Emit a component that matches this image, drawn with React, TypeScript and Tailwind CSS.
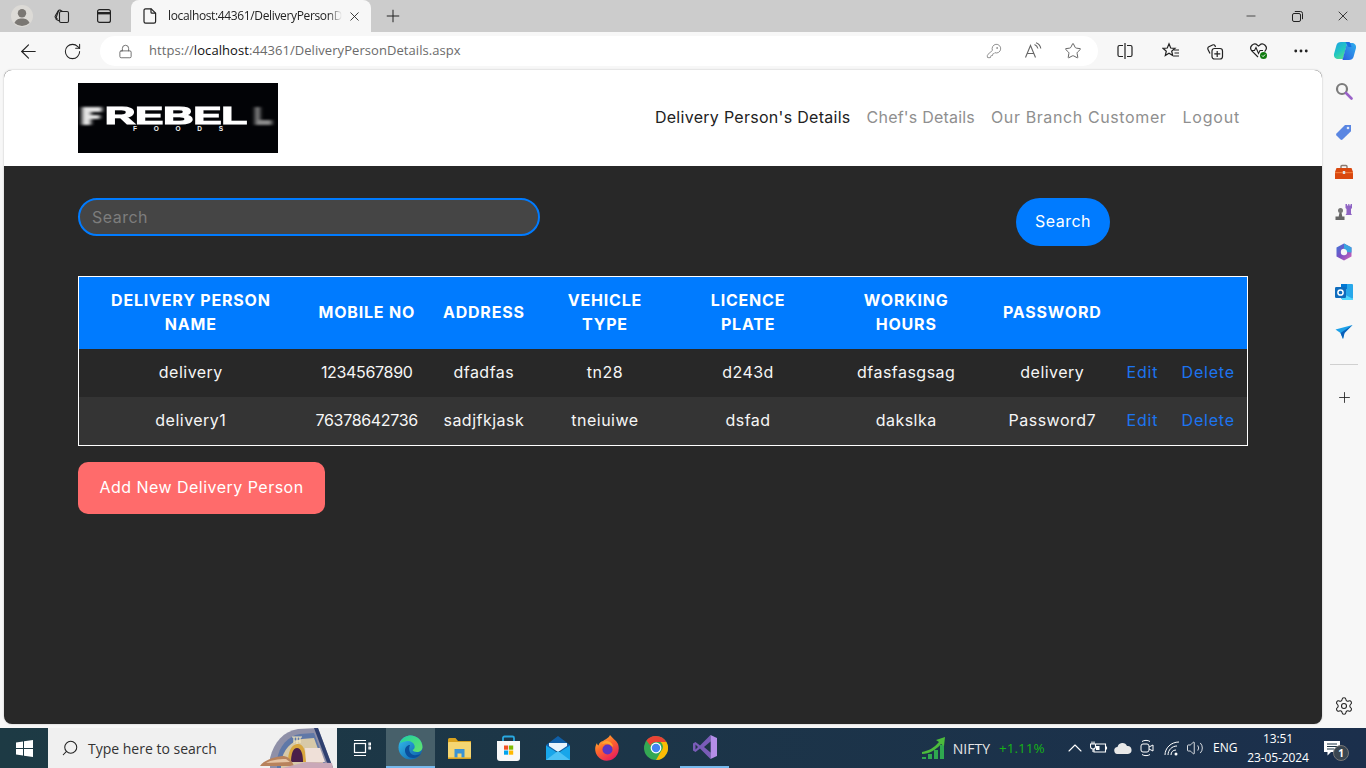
import React from "react";
import {
  ArrowLeft,
  RotateCw,
  Lock,
  KeyRound,
  Star,
  Plus,
  X,
  Minus,
  MoreHorizontal,
  Settings,
  ChevronUp,
  Volume2,
  Search,
} from "lucide-react";

const ui = "font-['Open_Sans','Noto_Sans',sans-serif]";
const mont = "font-['Inter','Noto_Sans',sans-serif]";

const rows = [
  ["delivery", "1234567890", "dfadfas", "tn28", "d243d", "dfasfasgsag", "delivery"],
  ["delivery1", "76378642736", "sadjfkjask", "tneiuiwe", "dsfad", "dakslka", "Password7"],
];

const Logo = () => (
  <svg width="200" height="70" viewBox="0 0 200 70" className="block shrink-0">
    <defs>
      <filter id="b1" x="-30%" y="-30%" width="160%" height="160%"><feGaussianBlur stdDeviation="2 1" /></filter>
      <filter id="b2"><feGaussianBlur stdDeviation="0.35" /></filter>
    </defs>
    <rect width="200" height="70" fill="#020306" />
    <path d="M4 24h20v5H13v3h9v4h-9v6H4z" fill="#e4e4e4" filter="url(#b1)" />
    <path d="M177 24h5v13h12v5h-17z" fill="#8a8a8a" filter="url(#b1)" />
    <text x="27" y="41" textLength="142" lengthAdjust="spacingAndGlyphs" fontFamily="Liberation Sans" fontWeight="700" fontSize="23" fill="#fff" stroke="#fff" strokeWidth="1.2" filter="url(#b2)">REBEL</text>
    <text x="55" y="48" textLength="90" fontFamily="Liberation Sans" fontWeight="700" fontSize="6.5" fill="#f0f0f0">FOODS</text>
  </svg>
);

const Workspaces = () => (
  <svg width="18" height="18" viewBox="0 0 18 18" fill="none" stroke="#222" strokeWidth="1.1">
    <rect x="6.5" y="4.5" width="9" height="11" rx="1.5" />
    <path d="M6.5 14 L3.8 12.8 a1.4 1.4 0 0 1-.8-1.8 L5.4 4 a1.4 1.4 0 0 1 1.7-.9 L9.5 4.5" />
    <path d="M4.5 12 L2.6 10.6 a1.4 1.4 0 0 1-.3-1.9 L5.6 3.4" />
  </svg>
);

const TabActions = () => (
  <svg width="16" height="16" viewBox="0 0 16 16" fill="none" stroke="#222" strokeWidth="1.2">
    <rect x="1.6" y="1.6" width="12.8" height="12.8" rx="2" />
    <path d="M1.6 5.2H14.4" strokeWidth="2.4" />
  </svg>
);

const Doc = () => (
  <svg width="14" height="16" viewBox="0 0 14 16" fill="none" stroke="#222" strokeWidth="1.2">
    <path d="M2.6 .8h5.6l4.4 4.4v8.4a1.6 1.6 0 0 1-1.6 1.6H2.6A1.6 1.6 0 0 1 1 13.6V2.4A1.6 1.6 0 0 1 2.6 .8z" />
    <path d="M8 .8v3.4a1 1 0 0 0 1 1h3.6" />
  </svg>
);

const Avatar = () => (
  <svg width="22" height="22" viewBox="0 0 22 22">
    <circle cx="11" cy="11" r="11" fill="#dcdad6" />
    <circle cx="11" cy="8.2" r="4.2" fill="#7a7773" />
    <path d="M3.5 18c1-3.4 4-4.6 7.5-4.6s6.5 1.2 7.5 4.6A11 11 0 0 1 3.5 18z" fill="#7a7773" />
  </svg>
);

const Restore = () => (
  <svg width="11" height="11" viewBox="0 0 11 11" fill="none" stroke="#222" strokeWidth="1">
    <rect x=".5" y="2.5" width="8" height="8" rx="1.5" />
    <path d="M2.8 .5h5.7a2 2 0 0 1 2 2v5.7" />
  </svg>
);

const ReadAloud = () => (
  <svg width="18" height="18" viewBox="0 0 18 18" fill="none" stroke="#666" strokeWidth="1.1">
    <path d="M1.5 15.5 6.5 3.5l5 12M3.2 11.5h6.6" />
    <path d="M10.5 2.5c1.8.7 3 2.2 3.4 4M12 .8c2.6 1 4.3 3 4.8 5.7" />
  </svg>
);

const SplitScreen = () => (
  <svg width="16" height="18" viewBox="0 0 16 18" fill="none" stroke="#222" strokeWidth="1.2">
    <path d="M6 3.5H2.5a1.5 1.5 0 0 0-1.5 1.5v8a1.5 1.5 0 0 0 1.5 1.5H6M10 3.5h3.5a1.5 1.5 0 0 1 1.5 1.5v8a1.5 1.5 0 0 1-1.5 1.5H10M8 1v16" />
  </svg>
);

const Favorites = () => (
  <svg width="18" height="18" viewBox="0 0 18 18" fill="none" stroke="#222" strokeWidth="1.2">
    <path d="M7 1.8 8.7 6l4.3.3-3.3 2.9 1 4.3L7 11.2l-3.7 2.3 1-4.3L1 6.3 5.3 6z" />
    <path d="M12 8h5M12.5 11h4.5M11.5 14h5.5" />
  </svg>
);

const Collections = () => (
  <svg width="18" height="18" viewBox="0 0 18 18" fill="none" stroke="#222" strokeWidth="1.2">
    <path d="M4 11.5 2 7.5a2 2 0 0 1 .9-2.7L6.5 3a2 2 0 0 1 2.6.9L9.5 5" />
    <rect x="6" y="6.5" width="10.5" height="10.5" rx="2.5" />
    <path d="M11.2 9v6M8.3 11.8h6" />
  </svg>
);

const Health = () => (
  <svg width="20" height="20" viewBox="0 0 20 20" fill="none">
    <path d="M9 16 2.8 9.8a4 4 0 0 1 5.7-5.6L9.5 5l1-.8a4 4 0 0 1 5.7 5.6l-.7.7" stroke="#222" strokeWidth="1.2" />
    <path d="M2 9.5h3.5l1.5-3 2.5 6 1.5-3h3" stroke="#222" strokeWidth="1.1" />
    <circle cx="14.5" cy="14.5" r="3.5" fill="#107c10" />
    <path d="m13 14.5 1.1 1.1 2-2.1" stroke="#fff" strokeWidth="1" />
  </svg>
);

const Copilot = () => (
  <svg width="24" height="24" viewBox="0 0 24 24">
    <defs>
      <linearGradient id="c1" x1="0" y1="0" x2="0.6" y2="1">
        <stop offset="0" stopColor="#1d9fe8" />
        <stop offset=".6" stopColor="#22c8c0" />
        <stop offset="1" stopColor="#55dd90" />
      </linearGradient>
      <linearGradient id="c2" x1="1" y1="0" x2="0" y2="1">
        <stop offset="0" stopColor="#2fb0ee" />
        <stop offset="1" stopColor="#2a5fe0" />
      </linearGradient>
    </defs>
    <path d="M8 3h6.5l-4.5 17H5.5C2.5 20 .5 18 1 15L3.5 6C4 4 5.8 3 8 3z" fill="url(#c1)" />
    <path d="M16 21h-6.5L14 4h4.5c3 0 5 2 4.5 5l-2.5 9c-.5 2-2.3 3-4.5 3z" fill="url(#c2)" />
    <path d="M12.5 3h3c1 0 1.5.5 1.8 1.2l1.2 3.8h-3z" fill="#1a6fe0" />
  </svg>
);

const SideSearch = () => (
  <svg width="18" height="18" viewBox="0 0 18 18" fill="none">
    <circle cx="7" cy="7" r="5" stroke="#7c7c7c" strokeWidth="2.2" />
    <path d="m11 11 5.5 5.5" stroke="#9a62c8" strokeWidth="2.6" strokeLinecap="round" />
  </svg>
);

const Tag = () => (
  <svg width="18" height="18" viewBox="0 0 18 18">
    <path d="M1.5 10.5 10 2h6v6.2L7.5 16.5a1.5 1.5 0 0 1-2 0l-4-4a1.5 1.5 0 0 1 0-2z" fill="#5a86e2" />
    <circle cx="13" cy="5" r="1.3" fill="#dfe8fa" />
  </svg>
);

const Toolbox = () => (
  <svg width="18" height="16" viewBox="0 0 18 16">
    <path d="M6 4V2.5A1 1 0 0 1 7 1.5h4a1 1 0 0 1 1 1V4" fill="none" stroke="#8a7a70" strokeWidth="1.4" />
    <path d="M1.5 4h15L18 8v7H0V8z" fill="#d9480f" />
    <rect x="0" y="8" width="18" height="1.2" fill="#f07a3a" />
    <rect x="7.8" y="7" width="2.4" height="3" fill="#dfe3e6" />
  </svg>
);

const Chess = () => (
  <svg width="18" height="18" viewBox="0 0 18 18">
    <path d="M10.5 1h1.5v1.5h1.2V1h1.2v1.5h1.2V1H17v4l-1 1v4.5l1 1.5h-6.500l1-1.500V6l-1-1z" fill="#8f63c4" />
    <circle cx="5.5" cy="7.5" r="2.5" fill="#777" />
    <path d="M4.5 9.5h2l.8 4h2.200v3.500H.5v-3.500h3.200z" fill="#666" />
  </svg>
);

const M365 = () => (
  <svg width="18" height="18" viewBox="0 0 18 18">
    <defs>
      <linearGradient id="m1" x1="0" y1="0" x2="1" y2="1">
        <stop offset="0" stopColor="#3b78d8" />
        <stop offset=".5" stopColor="#7c4fc4" />
        <stop offset="1" stopColor="#d868b8" />
      </linearGradient>
    </defs>
    <path d="M9 .5 16.5 4.5v9L9 17.5 1.5 13.5v-9z" fill="url(#m1)" />
    <circle cx="9" cy="9" r="3.2" fill="#f7f7f7" />
    <path d="M16.5 4.5v5L12 9a3 3 0 0 0-3-3V.5z" fill="#39a5e0" />
  </svg>
);

const Outlook = () => (
  <svg width="18" height="18" viewBox="0 0 18 18">
    <rect x="6" y="1" width="12" height="15" rx="1" fill="#28a8ea" />
    <rect x="6" y="1" width="6" height="5" fill="#0078d4" />
    <path d="M6 9.5 18 16v1H7z" fill="#50d9ff" />
    <rect x="0" y="4" width="11" height="11" rx="1.2" fill="#0f6cbd" />
    <circle cx="5.5" cy="9.5" r="2.6" fill="none" stroke="#fff" strokeWidth="1.5" />
  </svg>
);

const Plane = () => (
  <svg width="18" height="16" viewBox="0 0 18 16">
    <path d="M.5 5.5 17.5 1 9.5 9 8 15 5.5 9z" fill="#1da1e8" />
    <path d="M17.5 1 5.5 9 8 15 9.5 9z" fill="#0b5fb8" />
  </svg>
);

const WindowsLogo = () => (
  <svg width="17" height="17" viewBox="0 0 17 17" fill="#fff">
    <path d="M0 2.4 7 1.4V8H0zM8 1.2 17 0v8H8zM0 9h7v6.6l-7-1zM8 9h9v8l-9-1.2z" />
  </svg>
);

const TaskView = () => (
  <svg width="18" height="18" viewBox="0 0 18 18" fill="none" stroke="#fff" strokeWidth="1.2">
    <rect x="1.5" y="4.5" width="11" height="9" />
    <path d="M1 1.5h12M1 16.5h12M16 4h1.5v2H16zM16 8h1.5v2H16z" />
  </svg>
);

const Edge = () => (
  <svg width="25" height="25" viewBox="0 0 25 25">
    <defs>
      <linearGradient id="e1" x1="0" y1="0" x2="1" y2="1">
        <stop offset="0" stopColor="#35c1f1" />
        <stop offset="1" stopColor="#0c59a4" />
      </linearGradient>
      <linearGradient id="e2" x1="0" y1="0" x2="1" y2="1">
        <stop offset="0" stopColor="#1fd1a0" />
        <stop offset="1" stopColor="#66e36b" />
      </linearGradient>
    </defs>
    <circle cx="12.5" cy="12.5" r="12" fill="url(#e1)" />
    <path d="M2 8C4 2.5 9 .5 12.5 .5 19 .5 24.5 5.5 24.5 12c0 3-2.5 5-5.5 5-2.5 0-4-1-4.5-2 2-1 2.5-2.5 2-4.5C15.5 7 12 5.5 9 6 6 6.5 3.5 7.5 2 8z" fill="url(#e2)" />
    <path d="M12 10c-3 0-5 2.5-5 5.5 0 4 3.5 8 9 7.5 3-.5 5.5-2 7-4.5-2 1.5-5 2-7.5 1.5C12 19 10 15 12 10z" fill="#0a4f9c" />
  </svg>
);

const Explorer = () => (
  <svg width="23" height="21" viewBox="0 0 23 21">
    <path d="M0 1.5A1.5 1.5 0 0 1 1.5 0h6L10 3h13v3H0z" fill="#d9a21e" />
    <rect y="4" width="23" height="17" rx="1" fill="#f5d672" />
    <path d="M6.5 11h10v8.5h-3v-4h-4v4h-3z" fill="#3a93d4" />
    <rect x="0" y="19.5" width="23" height="1.5" fill="#d9a21e" />
  </svg>
);

const Store = () => (
  <svg width="23" height="26" viewBox="0 0 23 26">
    <path d="M6 6V3a1.5 1.5 0 0 1 1.5-1.5h8A1.5 1.5 0 0 1 17 3v3" fill="none" stroke="#29a8e0" strokeWidth="1.8" />
    <path d="M0 6h23v17a3 3 0 0 1-3 3H3a3 3 0 0 1-3-3z" fill="#f8f8f8" />
    <rect x="7" y="10.5" width="4.2" height="4.2" fill="#f25022" />
    <rect x="12" y="10.5" width="4.2" height="4.2" fill="#7fba00" />
    <rect x="7" y="15.5" width="4.2" height="4.2" fill="#00a4ef" />
    <rect x="12" y="15.5" width="4.2" height="4.2" fill="#ffb900" />
  </svg>
);

const Mail = () => (
  <svg width="24" height="24" viewBox="0 0 24 24">
    <path d="M12 0 24 9v3L12 16 0 12V9z" fill="#0f5fa8" />
    <path d="M3 7h18v3l-9 6-9-6z" fill="#e8f4fc" />
    <path d="M0 9.5 12 17 24 9.5V24H0z" fill="#18a6ea" />
    <path d="M0 24 12 15l12 9z" fill="#4cc2f5" />
  </svg>
);

const Firefox = () => (
  <svg width="24" height="26" viewBox="0 0 24 26">
    <defs>
      <linearGradient id="f1" x1="0" y1="0" x2="0.6" y2="1">
        <stop offset="0" stopColor="#ffcf3a" />
        <stop offset=".5" stopColor="#ff6a2a" />
        <stop offset="1" stopColor="#e8215c" />
      </linearGradient>
    </defs>
    <path d="M15 0c2 3 6 5 8 9 2 6 0 12-5 15-5 3-12 2-15.5-3C-1 16 0 11 2 8c0 1 .5 2 1.5 2.5C4 8 6 6.5 8 6c2-1.5 6-3 7-6z" fill="url(#f1)" />
    <circle cx="12.5" cy="14.5" r="5" fill="#5b35c4" />
    <path d="M7 9c3-1 8-1 11 3 0-3-3-6-6-6S8 7 7 9z" fill="#ffa62e" />
  </svg>
);

const Chrome = () => (
  <svg width="24" height="24" viewBox="0 0 24 24">
    <circle cx="12" cy="12" r="12" fill="#34a853" />
    <path d="M12 0a12 12 0 0 1 10.4 6H12a6 6 0 0 0-5.6 3.7L2.4 4.5A12 12 0 0 1 12 0z" fill="#ea4335" />
    <path d="M22.4 6A12 12 0 0 1 12 24l5.2-9a6 6 0 0 0-.7-9z" fill="#fbbc05" />
    <circle cx="12" cy="12" r="5.4" fill="#fff" />
    <circle cx="12" cy="12" r="4.2" fill="#4285f4" />
  </svg>
);

const VisualStudio = () => (
  <svg width="24" height="24" viewBox="0 0 24 24">
    <path d="M17.5 0 7 10.5 2.5 7 0 8.5v7L2.5 17 7 13.5 17.5 24z" fill="#7a5cb8" />
    <path d="M17.5 0 24 3v18l-6.5 3z" fill="#b58ee8" />
    <path d="M17.5 6.5v11L11 12z" fill="#1d3444" />
    <path d="M2.5 9.5v5L5 12z" fill="#1d3444" />
  </svg>
);

const SearchArt = () => (
  <svg width="77" height="40" viewBox="0 0 77 40" className="block shrink-0">
    <path d="M10 30C14 14 24 3 38 1l20-1 15 40H10z" fill="#8f90a8" />
    <path d="M58 0 73 40h-4L54 0z" fill="#2f4070" />
    <path d="M17 32C19 18 28 8 40 6l14-1 13 35H17z" fill="#5f78a8" />
    <path d="M21 34C23 22 31 13 42 11l12-1 11 30H21z" fill="#d7c9a8" />
    <path d="M28 34c0-10 3-17 9-18s9 6 9 18z" fill="#d8a63e" />
    <path d="M31 34c0-8 2-14 6-14s6 6 6 14z" fill="#4a1f4a" />
    <path d="M45 20h15l5 14H46z" fill="#efe0d8" />
    <path d="M0 38c4-6 14-9 22-10 6 0 9 3 12 10z" fill="#b8825c" />
    <path d="M6 35c5-3 12-4 20-4l4 3z" fill="#e6c4a4" />
    <path d="M22 40 46 34l26 1 1 5z" fill="#c9a8b8" />
    <path d="M32 9h10M34 13h6M34 9v6M37 9v7M40 9v6" stroke="#f4e6bc" strokeWidth="1.2" fill="none" />
  </svg>
);

const Nifty = () => (
  <svg width="24" height="24" viewBox="0 0 24 24" fill="#2fa84f">
    <path d="M0 21h4v2H0zM6 18h4v5H6zM12 14h4v9h-4zM18 9h4v14h-4z" />
    <path d="M0 16C6 15 12 12 17 6l-3-2 9-3-1 9-3-2C14 14 7 18 0 18z" fill="#4cbb3c" />
  </svg>
);

const Battery = () => (
  <svg width="18" height="14" viewBox="0 0 18 14" fill="none" stroke="#fff" strokeWidth="1.1">
    <path d="M6 3h9.5v8H4V8" />
    <path d="M16.5 5.5v3" />
    <path d="M.5 3h5v2.5a2.5 2.5 0 0 1-5 0zM2 .5V3M4 .5V3M3 8v3" />
    <rect x="6" y="5" width="3.5" height="4" fill="#fff" stroke="none" />
  </svg>
);

const Cloud = () => (
  <svg width="18" height="12" viewBox="0 0 18 12" fill="#e8e8e8">
    <path d="M4 12a3.5 3.5 0 0 1-.5-7A5 5 0 0 1 13 4a4 4 0 0 1 1 8z" />
  </svg>
);

const Meet = () => (
  <svg width="14" height="18" viewBox="0 0 14 18" fill="none" stroke="#fff" strokeWidth="1">
    <rect x="1" y="5" width="8" height="8" rx="2" />
    <path d="m9 8 4-2v6l-4-2M2 2.5C4 1 8 1 10 2.5M2 15.500c2 1.500 6 1.500 8 0" />
  </svg>
);

const Wifi = () => (
  <svg width="16" height="15" viewBox="0 0 16 15" fill="none" stroke="#fff" strokeWidth="1">
    <path d="M1 14C1 7 7 1 15 1M4 14c0-5 4-9 9-9M7 14c0-3 2-5 5-5" />
    <circle cx="12" cy="13" r="1.5" fill="#fff" stroke="none" />
  </svg>
);

const Notif = () => (
  <svg width="17" height="15" viewBox="0 0 17 15" fill="#fff">
    <path d="M0 0h16v11H7l-3.5 3.5V11H0z" />
    <path d="M3 3h10M3 5.5h10M3 8h7" stroke="#1d3444" strokeWidth="1" />
  </svg>
);

const th = "px-1 pt-[11px] pb-[13px] font-bold uppercase text-white text-center leading-6 text-[16px] tracking-[0.05em]";
const td = "px-0 pb-[2px] h-12 text-center text-[16px] text-[#f6f6f6] tracking-[0.03em]";
const tdNum = "px-0 pb-[2px] h-12 text-center text-[16px] text-[#f6f6f6] tracking-[-0.02em]";
const link = "px-0 pb-[2px] h-12 text-center text-[16px] text-[#1c74f0] tracking-[0.05em]";

export default function App() {
  return (
    <div className={`w-[1366px] h-[768px] overflow-hidden flex flex-col bg-[#f7f7f7] ${ui}`}>
      <div className="h-8 bg-[#cccccc] flex items-center shrink-0">
        <div className="w-11 flex justify-center"><Avatar /></div>
        <div className="w-9 flex justify-center"><Workspaces /></div>
        <div className="w-12 flex justify-center"><TabActions /></div>
        <div className="w-[240px] h-8 ml-[3px] bg-[#f7f7f7] rounded-t-lg flex items-center pl-[12px] pr-[8px]">
          <Doc />
          <span className="ml-[11px] w-[174px] whitespace-nowrap text-[12px] text-[#222] tracking-[-0.03em] [mask-image:linear-gradient(to_right,#000_92%,transparent)]">localhost:44361/DeliveryPersonD</span>
          <X size={15} strokeWidth={1.4} className="ml-[5px] text-[#222]" />
        </div>
        <div className="w-11 flex justify-center"><Plus size={20} strokeWidth={1.2} className="text-[#222]" /></div>
        <div className="ml-auto flex items-center">
          <div className="w-[46px] flex justify-center"><Minus size={14} strokeWidth={1.3} className="text-[#222]" /></div>
          <div className="w-[46px] flex justify-center"><Restore /></div>
          <div className="w-[46px] flex justify-center"><X size={16} strokeWidth={1.3} className="text-[#222]" /></div>
        </div>
      </div>

      <div className="h-[38px] flex items-center shrink-0">
        <div className="w-[56px] flex justify-center"><ArrowLeft size={23} strokeWidth={1.2} className="text-[#222]" /></div>
        <div className="w-[32px] flex justify-center"><RotateCw size={19} strokeWidth={1.3} className="text-[#222]" /></div>
        <div className="ml-[12px] w-[998px] h-[30px] bg-white rounded-full flex items-center pl-[18px] pr-[16px]">
          <Lock size={15} strokeWidth={1.3} className="text-[#555]" />
          <span className="ml-[16px] text-[13px] text-[#6b6b6b] tracking-[0.005em]">https://<span className="text-[#111]">localhost</span>:44361/DeliveryPersonDetails.aspx</span>
          <div className="ml-auto flex items-center gap-[22px]">
            <KeyRound size={16} strokeWidth={1.2} className="text-[#777]" />
            <ReadAloud />
            <Star size={18} strokeWidth={1.2} className="text-[#555]" />
          </div>
        </div>
        <div className="w-[54px] flex justify-center"><SplitScreen /></div>
        <div className="w-[37px] flex justify-center"><Favorites /></div>
        <div className="w-[52px] flex justify-center"><Collections /></div>
        <div className="w-[35px] flex justify-center"><Health /></div>
        <div className="w-[50px] flex justify-center"><MoreHorizontal size={18} strokeWidth={1.8} className="text-[#222]" /></div>
        <div className="w-[38px] flex justify-center"><Copilot /></div>
      </div>

      <div className="h-[654px] flex shrink-0">
        <div className="w-[1318px] ml-1 h-full rounded-lg overflow-hidden flex flex-col bg-[#282828] shadow-[0_0_2px_rgba(0,0,0,0.25)]">
          <header className={`h-24 bg-white flex items-center pl-[74px] pr-[82px] shrink-0 ${mont}`}>
            <Logo />
            <nav className="ml-auto flex gap-4 pb-[2px] text-[16px]">
              <span className="text-[#222] tracking-[0.018em]">Delivery Person's Details</span>
              <span className="text-[#8f8f8f] tracking-[0.013em]">Chef's Details</span>
              <span className="text-[#8f8f8f] tracking-[0.038em]">Our Branch Customer</span>
              <span className="text-[#8f8f8f] tracking-[0.05em]">Logout</span>
            </nav>
          </header>
          <main className={`flex-1 pl-[74px] pt-8 ${mont}`}>
            <div className="flex items-start">
              <input
                placeholder="Search"
                className="w-[462px] h-[38px] bg-[#454545] rounded-full border-2 border-[#007bff] px-3 text-[16px] tracking-[0.03em] placeholder:text-[#7d7d7d] outline-none"
              />
              <button className="ml-[476px] w-[94px] h-12 pb-[2px] rounded-full bg-[#007bff] text-white text-[16px] tracking-[0.03em]">Search</button>
            </div>
            <table className="mt-[30px] w-[1170px] table-fixed border border-white border-collapse">
              <colgroup>
                <col className="w-[224px]" />
                <col className="w-[128px]" />
                <col className="w-[106px]" />
                <col className="w-[136px]" />
                <col className="w-[150px]" />
                <col className="w-[166px]" />
                <col className="w-[126px]" />
                <col className="w-[54px]" />
                <col className="w-[78px]" />
              </colgroup>
              <thead>
                <tr className="bg-[#007bff] h-[72px]">
                  <th className={th}>Delivery Person<br />Name</th>
                  <th className={th}>Mobile No</th>
                  <th className={th}>Address</th>
                  <th className={th}>Vehicle<br />Type</th>
                  <th className={th}>Licence<br />Plate</th>
                  <th className={th}>Working<br />Hours</th>
                  <th className={th}>Password</th>
                  <th className={th}></th>
                  <th className={th}></th>
                </tr>
              </thead>
              <tbody>
                {rows.map((r, i) => (
                  <tr key={r[0]} className={i === 1 ? "bg-[#343434]" : "bg-[#282828]"}>
                    {r.map((c, j) => (
                      <td key={j} className={j === 1 ? tdNum : td}>{c}</td>
                    ))}
                    <td className={link}>Edit</td>
                    <td className={link}>Delete</td>
                  </tr>
                ))}
              </tbody>
            </table>
            <button className="mt-4 w-[247px] h-[52px] pb-[2px] rounded-[10px] bg-[#ff6b6b] text-white text-[16px] tracking-[0.03em]">Add New Delivery Person</button>
          </main>
        </div>
        <aside className="w-11 flex flex-col items-center pt-[1px]">
          <div className="h-10 flex items-center"><SideSearch /></div>
          <div className="h-[41px] flex items-center"><Tag /></div>
          <div className="h-10 flex items-center"><Toolbox /></div>
          <div className="h-10 flex items-center"><Chess /></div>
          <div className="h-10 flex items-center"><M365 /></div>
          <div className="h-10 flex items-center"><Outlook /></div>
          <div className="h-10 flex items-center"><Plane /></div>
          <div className="mt-[12px] w-7 h-px bg-[#d0d0d0]" />
          <div className="h-[64px] flex items-center"><Plus size={17} strokeWidth={1.2} className="text-[#222]" /></div>
          <div className="mt-auto h-9 flex items-center"><Settings size={20} strokeWidth={1.3} className="text-[#222]" /></div>
        </aside>
      </div>

      <div className="h-1 shrink-0" />

      <div className="h-10 bg-gradient-to-r from-[#1d3a44] to-[#1b2f4c] flex items-center shrink-0 text-white">
        <div className="w-12 flex justify-center"><WindowsLogo /></div>
        <div className="w-[289px] h-10 bg-[#f0f0f0] flex items-center pl-[13px] overflow-hidden">
          <Search size={18} strokeWidth={1.4} className="text-[#222] -scale-x-100" />
          <span className="ml-[9px] text-[14px] text-[#333]">Type here to search</span>
          <div className="ml-auto"><SearchArt /></div>
        </div>
        <div className="w-[49px] flex justify-center"><TaskView /></div>
        <div className="w-[49px] h-10 flex items-center justify-center bg-[#47606a] border-b-2 border-[#76b9ed]"><Edge /></div>
        <div className="w-[49px] flex justify-center"><Explorer /></div>
        <div className="w-[49px] flex justify-center"><Store /></div>
        <div className="w-[49px] flex justify-center"><Mail /></div>
        <div className="w-[49px] flex justify-center"><Firefox /></div>
        <div className="w-[49px] flex justify-center"><Chrome /></div>
        <div className="w-[49px] h-10 flex items-center justify-center border-b-2 border-[#76b9ed]"><VisualStudio /></div>
        <div className="ml-auto flex items-center h-10 mr-[14px]">
          <Nifty />
          <span className="ml-[7px] text-[14px] text-[#e6e6e6]">NIFTY</span>
          <span className="ml-[9px] w-[47px] text-[13.5px] text-[#16b216]">+1.11%</span>
          <div className="ml-[21px] w-4 flex justify-center"><ChevronUp size={24} strokeWidth={1.1} className="shrink-0" /></div>
          <div className="ml-[5px] w-[22px] flex justify-center"><Battery /></div>
          <div className="ml-[2px] w-[22px] flex justify-center"><Cloud /></div>
          <div className="ml-[2px] w-[22px] flex justify-center"><Meet /></div>
          <div className="ml-[3px] w-[22px] flex justify-center"><Wifi /></div>
          <div className="w-6 flex justify-center"><Volume2 size={18} strokeWidth={1.1} /></div>
          <span className="ml-[6px] w-[24px] text-[12px]">ENG</span>
          <div className="ml-[6px] w-[70px] text-center text-[12px] leading-[19px] tracking-[-0.01em]">13:51<br />23-05-2024</div>
          <div className="relative w-10 ml-[-1px] flex justify-center">
            <Notif />
            <span className="absolute left-[21px] top-[4px] w-4 h-4 rounded-full bg-[#3a4650] border border-[#777] text-[10px] leading-[14px] text-center font-bold">1</span>
          </div>
        </div>
      </div>
    </div>
  );
}
